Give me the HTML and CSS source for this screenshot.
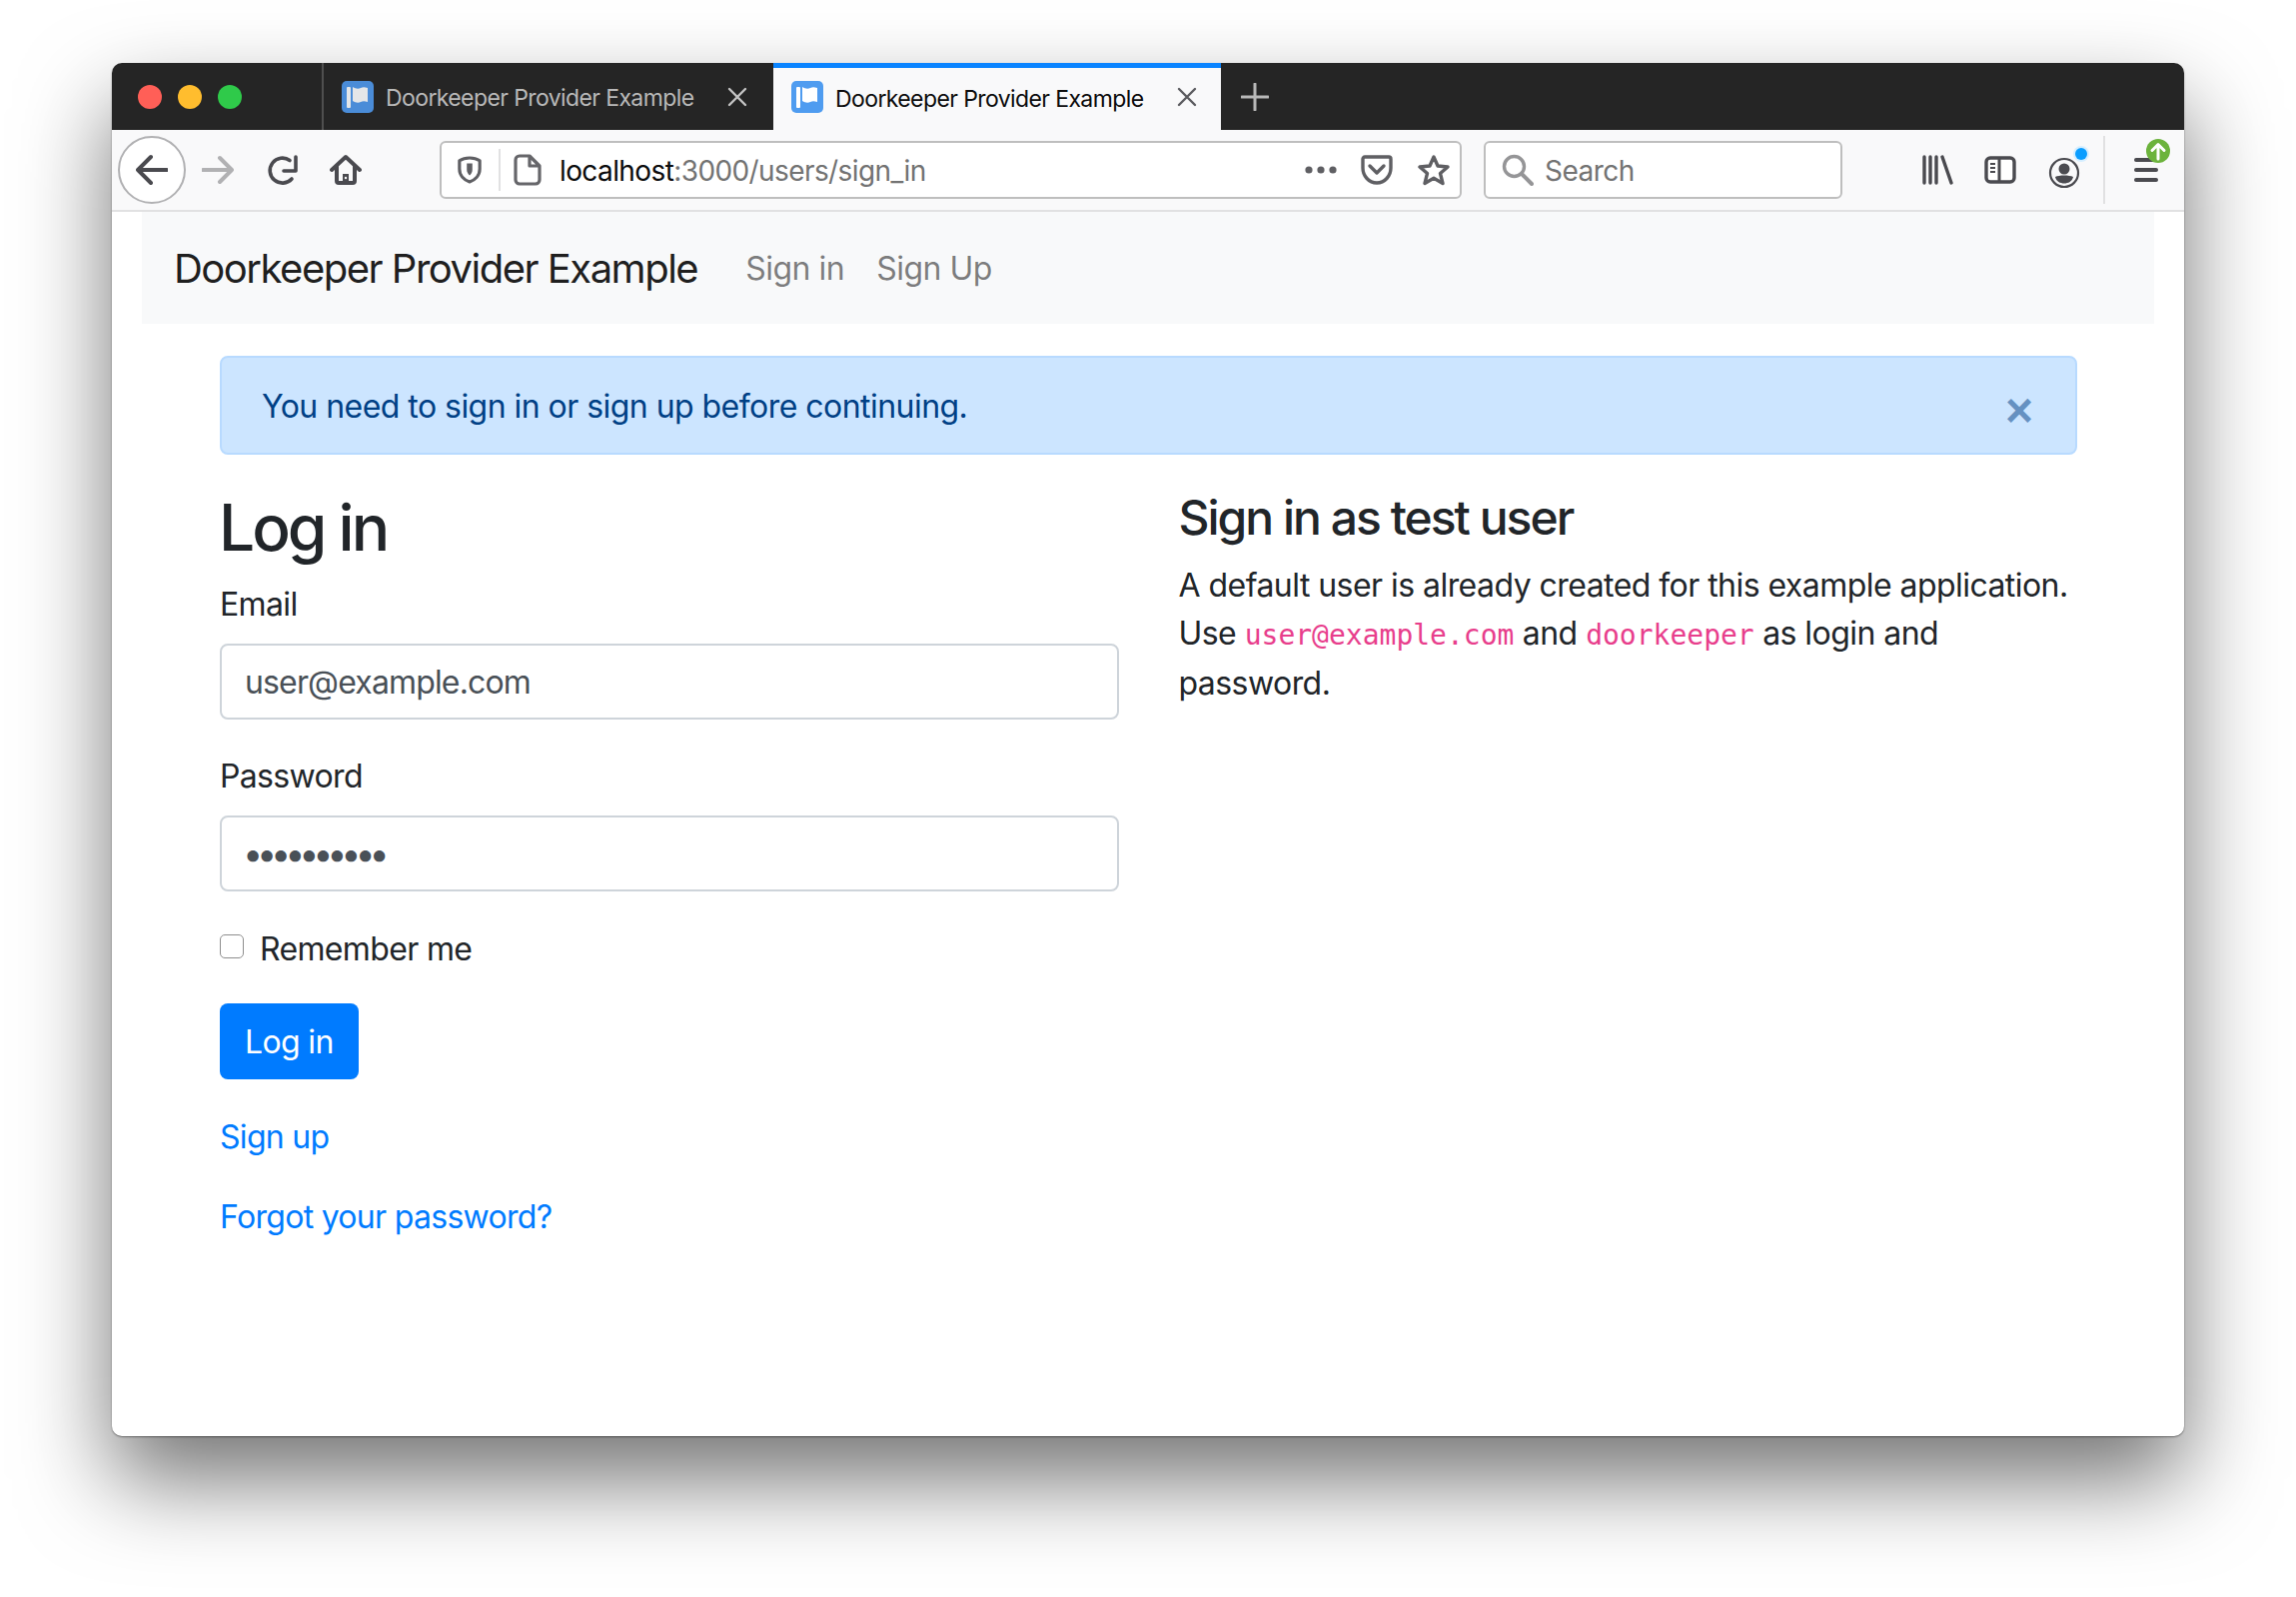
FILE: index.html
```html
<!DOCTYPE html>
<html lang="en">
<head>
    <meta charset="UTF-8">
    <meta name="viewport" content="width=device-width, initial-scale=1.0">
    <title>Doorkeeper Provider Example</title>
    <link rel="stylesheet" href="styles.css">
</head>
<body>

    <div class="window">
        <!-- Tab strip -->
        <div class="tabbar">
            <div class="traffic">
                <span class="dot dot-red"></span>
                <span class="dot dot-yellow"></span>
                <span class="dot dot-green"></span>
            </div>
            <div class="tab">
                <svg class="favicon" viewBox="0 0 32 32"><rect width="32" height="32" rx="5" fill="#4a8cd8"/><rect x="5" y="6" width="4" height="21" rx="1" fill="#e4e6e8"/><path d="M11 6c3 2 6 2 8 1s4-1 7 0v14c-3-1-5-1-7 0s-5 1-8-1z" fill="#e4e6e8"/></svg>
                <span class="tab-title">Doorkeeper Provider Example</span>
                <svg class="tab-close" viewBox="0 0 20 20"><path d="M2 2 18 18M18 2 2 18" stroke="#c4c4c4" stroke-width="2.4" stroke-linecap="round"/></svg>
            </div>
            <div class="tab tab-active">
                <svg class="favicon" viewBox="0 0 32 32"><rect width="32" height="32" rx="5" fill="#4f9cf0"/><rect x="5" y="6" width="4" height="21" rx="1" fill="#fff"/><path d="M11 6c3 2 6 2 8 1s4-1 7 0v14c-3-1-5-1-7 0s-5 1-8-1z" fill="#fff"/></svg>
                <span class="tab-title">Doorkeeper Provider Example</span>
                <svg class="tab-close" viewBox="0 0 20 20"><path d="M2 2 18 18M18 2 2 18" stroke="#5a5a5e" stroke-width="2.4" stroke-linecap="round"/></svg>
            </div>
            <svg class="tab-new" viewBox="0 0 28 28"><path d="M14 1V27M1 14H27" stroke="#b8b8b8" stroke-width="3" stroke-linecap="round"/></svg>
        </div>

        <!-- Browser toolbar -->
        <div class="toolbar">
            <div class="back-btn">
                <svg viewBox="0 0 32 32" class="icon"><path d="M2 16H31M15 3 2 16 15 29" fill="none" stroke="#4a4a4f" stroke-width="4" stroke-linecap="round" stroke-linejoin="round"/></svg>
            </div>
            <svg viewBox="0 0 32 32" class="icon forward"><path d="M1 16H30M18 4 30 16 18 28" fill="none" stroke="#b1b1b3" stroke-width="4" stroke-linecap="round" stroke-linejoin="round"/></svg>
            <svg viewBox="0 0 32 32" class="icon reload"><path d="M24 6.500A12.500 12.500 0 1 0 26 25" fill="none" stroke="#4a4a4f" stroke-width="3.600" stroke-linecap="round"/><path d="M30 3V17H18" fill="none" stroke="#4a4a4f" stroke-width="3.600" stroke-linecap="round" stroke-linejoin="round"/></svg>
            <svg viewBox="0 0 32 32" class="icon home"><path d="M2 16 16 3 30 16M7 12V27a2 2 0 0 0 2 2H23a2 2 0 0 0 2-2V12" fill="none" stroke="#4a4a4f" stroke-width="4" stroke-linecap="round" stroke-linejoin="round"/><path d="M13 30V20h6V30z" fill="#4a4a4f"/><circle cx="16" cy="24" r="1.2" fill="#f9f9fa"/></svg>

            <div class="urlbar">
                <svg viewBox="0 0 26 30" class="shield"><path d="M13 2C9 2 5 3 2 5V14C2 21 7 26 13 28 19 26 24 21 24 14V5C21 3 17 2 13 2Z" fill="none" stroke="#5f5f63" stroke-width="3.4" stroke-linejoin="round"/><path d="M10 8H16V15C16 18 14 20 13 21 11 19 10 17 10 15Z" fill="#5f5f63"/></svg>
                <span class="url-divider"></span>
                <svg viewBox="0 0 28 32" class="page"><path d="M16 2H6a4 4 0 0 0-4 4V26a4 4 0 0 0 4 4H22a4 4 0 0 0 4-4V12ZM16 2V12H26" fill="none" stroke="#66666a" stroke-width="3.2" stroke-linejoin="round"/></svg>
                <span class="url-text"><span class="url-host">localhost</span>:3000/users/sign_in</span>
                <svg viewBox="0 0 32 8" class="more"><circle cx="4" cy="4" r="3.6" fill="#5f5f63"/><circle cx="16" cy="4" r="3.6" fill="#5f5f63"/><circle cx="28" cy="4" r="3.6" fill="#5f5f63"/></svg>
                <svg viewBox="0 0 32 30" class="pocket"><path d="M4 2H28a2 2 0 0 1 2 2V13C30 21 24 28 16 28S2 21 2 13V4a2 2 0 0 1 2-2Z" fill="none" stroke="#5f5f63" stroke-width="3.4"/><path d="M9 11 16 18 23 11" fill="none" stroke="#5f5f63" stroke-width="3.4" stroke-linecap="round" stroke-linejoin="round"/></svg>
                <svg viewBox="0 0 32 32" class="star"><path d="M16 3 20 12 30 13 22.500 19.500 25 29.500 16 24.300 7 29.500 9.500 19.500 2 13 12 12Z" fill="none" stroke="#5f5f63" stroke-width="3.4" stroke-linejoin="round"/></svg>
            </div>

            <div class="searchbar">
                <svg viewBox="0 0 32 32" class="glass"><circle cx="12.500" cy="12.500" r="10" fill="none" stroke="#959597" stroke-width="3.4"/><path d="M20 20 30 30" stroke="#959597" stroke-width="4" stroke-linecap="round"/></svg>
                <span class="search-text">Search</span>
            </div>

            <svg viewBox="0 0 32 32" class="icon library"><path d="M3 3V29M9 3V29M15 3V29M21 3 30 29" fill="none" stroke="#4a4a4f" stroke-width="3.4" stroke-linecap="round"/></svg>
            <svg viewBox="0 0 32 32" class="icon sidebar"><rect x="2" y="4" width="28" height="24" rx="4" fill="#fff" stroke="#4a4a4f" stroke-width="3.4"/><path d="M15 4V28" stroke="#4a4a4f" stroke-width="3"/><path d="M6 10H11M6 14H11M6 18H11" stroke="#4a4a4f" stroke-width="2"/></svg>
            <div class="account">
                <svg viewBox="0 0 32 32" class="icon"><circle cx="16" cy="16" r="14" fill="none" stroke="#4a4a4f" stroke-width="2.2"/><circle cx="16" cy="12" r="5.500" fill="#4a4a4f"/><path d="M7 20C11 18 21 18 25 20 24 24.500 20 26.500 16 26.500S8 24.500 7 20Z" fill="#4a4a4f"/></svg>
                <span class="account-dot"></span>
            </div>
            <span class="toolbar-sep"></span>
            <div class="menu">
                <span class="menu-bar"></span>
                <span class="menu-bar"></span>
                <span class="menu-bar"></span>
                <svg viewBox="0 0 24 24" class="menu-badge"><circle cx="12" cy="12" r="12" fill="#6cb33c"/><path d="M12 20V6M6 11.500 12 5.500 18 11.500" fill="none" stroke="#fff" stroke-width="3" stroke-linecap="round" stroke-linejoin="round"/></svg>
            </div>
        </div>

        <!-- Page content -->
        <div class="page-content">
            <nav class="navbar">
                <a class="navbar-brand" href="#">Doorkeeper Provider Example</a>
                <a class="nav-link" href="#">Sign in</a>
                <a class="nav-link" href="#">Sign Up</a>
            </nav>

            <div class="container">
                <div class="alert">
                    <span class="alert-text">You need to sign in or sign up before continuing.</span>
                    <button class="alert-close" type="button">&times;</button>
                </div>

                <div class="row">
                    <div>
                        <h2>Log in</h2>
                        <form>
                            <div class="form-group">
                                <label for="email">Email</label>
                                <input type="email" id="email" value="user@example.com">
                            </div>
                            <div class="form-group">
                                <label for="password">Password</label>
                                <input class="password" type="password" id="password" value="doorkeeper">
                            </div>
                            <div class="form-check">
                                <span class="checkbox"></span>
                                <span class="check-label">Remember me</span>
                            </div>
                            <button class="btn" type="submit">Log in</button>
                        </form>
                        <p class="link"><a href="#">Sign up</a></p>
                        <p class="link"><a href="#">Forgot your password?</a></p>
                    </div>
                    <div>
                        <h4>Sign in as test user</h4>
                        <p class="info">A default user is already created for this example application. Use <code>user@example.com</code> and <code>doorkeeper</code> as login and password.</p>
                    </div>
                </div>
            </div>
        </div>
    </div>

</body>
</html>
```

FILE: styles.css
```css
* {
    box-sizing: border-box;
}

body {
    margin: 0;
    padding: 63px 0 0 112px;
    height: 1598px;
    overflow: hidden;
    background-color: #fff;
    font-family: Inter, "Liberation Sans", sans-serif;
    font-size: 32px;
    line-height: 48px;
    letter-spacing: -0.65px;
    color: #212529;
}

.window {
    width: 2074px;
    height: 1374px;
    background: #fff;
    border-radius: 10px;
    box-shadow: 0 44px 90px rgba(0, 0, 0, 0.55), 0 1px 2px rgba(0, 0, 0, 0.4);
}

/* tab strip */
.tabbar {
    display: flex;
    align-items: center;
    height: 67px;
    background: #252525;
    border-radius: 10px 10px 0 0;
}

.traffic {
    display: flex;
    align-items: center;
    gap: 16px;
    width: 212px;
    height: 100%;
    padding-left: 26px;
    border-right: 2px solid #4f4f4f;
}

.dot {
    width: 24px;
    height: 24px;
    border-radius: 50%;
}

.dot-red { background: #ff5f57; }
.dot-yellow { background: #ffbd2e; }
.dot-green { background: #2fca4a; }

.tab {
    display: flex;
    align-items: center;
    width: 450px;
    height: 100%;
    padding-left: 18px;
    color: #b9b9b9;
}

.tab-active {
    width: 448px;
    padding-bottom: 4px;
    background: #f9f9fa;
    border-top: 5px solid #0a84ff;
    color: #0c0c0d;
}

.favicon {
    width: 32px;
    height: 32px;
    flex: none;
}

.tab-title {
    flex: none;
    width: 342px;
    margin-left: 12px;
    padding-top: 3px;
    font-size: 23px;
    letter-spacing: -0.6px;
    white-space: nowrap;
}

.tab-close {
    width: 20px;
    height: 20px;
    flex: none;
}

.tab-new {
    width: 28px;
    height: 28px;
    margin-left: 20px;
}

/* toolbar */
.toolbar {
    display: flex;
    align-items: center;
    height: 82px;
    padding-left: 6px;
    background: #f9f9fa;
    border-bottom: 2px solid #e1e1e2;
}

.icon {
    width: 32px;
    height: 32px;
    flex: none;
}

.back-btn {
    display: flex;
    align-items: center;
    justify-content: center;
    width: 68px;
    height: 68px;
    flex: none;
    background: #fff;
    border: 2px solid #b1b1b3;
    border-radius: 50%;
}

.forward { margin-left: 16px; }
.reload { margin-left: 32px; }
.home { margin-left: 32px; }

.urlbar {
    display: flex;
    align-items: center;
    width: 1023px;
    height: 58px;
    margin-left: 78px;
    padding-left: 16px;
    background: #fff;
    border: 2px solid #bebebe;
    border-radius: 6px;
}

.shield {
    width: 24px;
    height: 28px;
    flex: none;
}

.url-divider {
    width: 2px;
    height: 42px;
    margin-left: 17px;
    background: #e1e1e2;
}

.page {
    width: 28px;
    height: 32px;
    flex: none;
    margin-left: 13px;
}

.url-text {
    flex: 1;
    margin-left: 18px;
    padding-top: 2px;
    font-size: 28px;
    letter-spacing: -0.6px;
    color: #737373;
    white-space: nowrap;
}

.url-host {
    color: #0c0c0d;
}

.more {
    width: 32px;
    height: 8px;
    flex: none;
}

.pocket {
    width: 32px;
    height: 30px;
    flex: none;
    margin-left: 24px;
}

.star {
    width: 32px;
    height: 32px;
    flex: none;
    margin: 0 10px 0 25px;
}

.searchbar {
    display: flex;
    align-items: center;
    width: 359px;
    height: 58px;
    margin-left: 22px;
    padding-left: 16px;
    background: #fff;
    border: 2px solid #bebebe;
    border-radius: 6px;
}

.glass {
    width: 32px;
    height: 32px;
    flex: none;
}

.search-text {
    margin-left: 11px;
    padding-top: 2px;
    font-size: 28px;
    letter-spacing: -0.5px;
    color: #737373;
}

.library { margin-left: 79px; }
.sidebar { margin-left: 31px; }

.account {
    position: relative;
    width: 32px;
    height: 32px;
    flex: none;
    margin-left: 32px;
}

.account-dot {
    position: absolute;
    top: -6px;
    right: -7px;
    width: 12px;
    height: 12px;
    background: #0a9dff;
    border-radius: 50%;
    box-shadow: 0 0 0 2px #d5eeff;
}

.toolbar-sep {
    width: 2px;
    height: 68px;
    margin-left: 23px;
    background: #e1e1e2;
}

.menu {
    position: relative;
    display: flex;
    flex-direction: column;
    gap: 6px;
    width: 24px;
    margin-left: 29px;
}

.menu-bar {
    height: 4px;
    background: #4a4a4f;
    border-radius: 2px;
}

.menu-badge {
    position: absolute;
    top: -19px;
    left: 12px;
    width: 24px;
    height: 24px;
}

/* page */
.page-content {
    padding: 0 30px;
}

.navbar {
    display: flex;
    align-items: center;
    height: 112px;
    padding: 0 32px;
    background: #f8f9fa;
}

.navbar-brand {
    margin-right: 32px;
    padding-top: 2px;
    font-size: 40px;
    letter-spacing: -1.5px;
    color: rgba(0, 0, 0, 0.9);
    text-decoration: none;
}

.nav-link {
    padding: 2px 16px 0;
    letter-spacing: -0.5px;
    color: rgba(0, 0, 0, 0.5);
    text-decoration: none;
}

.container {
    padding: 32px 77px 0 78px;
}

.alert {
    display: flex;
    align-items: center;
    justify-content: space-between;
    height: 99px;
    padding: 0 40px;
    margin-bottom: 32px;
    background: #cce5ff;
    border: 2px solid #b8daff;
    border-radius: 8px;
    color: #004085;
}

.alert-text {
    padding-top: 2px;
    letter-spacing: -0.54px;
}

.alert-close {
    margin-right: 2px;
    padding: 10px 0 0;
    background: none;
    border: none;
    font-family: "Liberation Sans", sans-serif;
    font-size: 48px;
    font-weight: bold;
    line-height: 48px;
    color: #004085;
    opacity: 0.5;
}

.row {
    display: grid;
    grid-template-columns: 1fr 1fr;
    column-gap: 60px;
}

h2 {
    margin: 0 0 14px -1px;
    padding-top: 2px;
    font-size: 64px;
    font-weight: 500;
    line-height: 77px;
    letter-spacing: -3px;
}

h4 {
    margin: 0 0 15px;
    padding-top: 2px;
    font-size: 48px;
    font-weight: 500;
    line-height: 58px;
    letter-spacing: -2px;
}

.form-group {
    margin-bottom: 32px;
}

label {
    display: block;
    margin-bottom: 15px;
    padding-top: 1px;
}

input {
    display: block;
    width: 100%;
    height: 76px;
    padding: 12px 24px 12px 23px;
    border: 2px solid #ced4da;
    border-radius: 8px;
    font-family: inherit;
    font-size: 32px;
    letter-spacing: -0.85px;
    color: #495057;
}

.password {
    padding-left: 21px;
    font-size: 36px;
    letter-spacing: -6.2px;
}

.form-check {
    display: flex;
    align-items: center;
    gap: 16px;
    margin-bottom: 30px;
}

.checkbox {
    width: 24px;
    height: 24px;
    margin-bottom: 4px;
    background: #fff;
    border: 1px solid #8e8e8e;
    border-radius: 5px;
}

.check-label {
    padding-top: 2px;
}

.btn {
    display: block;
    height: 76px;
    padding: 0 25px;
    background: #007bff;
    border: none;
    border-radius: 8px;
    font-family: inherit;
    font-size: 32px;
    letter-spacing: -0.65px;
    color: #fff;
}

form {
    padding-bottom: 2px;
}

.link {
    margin: 28px 0 0;
    padding-top: 4px;
    letter-spacing: -0.7px;
}

.link a {
    color: #007bff;
    text-decoration: none;
}

.info {
    margin: 0;
    letter-spacing: -0.55px;
}

code {
    font-family: "DejaVu Sans Mono", monospace;
    font-size: 28px;
    letter-spacing: 0;
    color: #e83e8c;
}
```
